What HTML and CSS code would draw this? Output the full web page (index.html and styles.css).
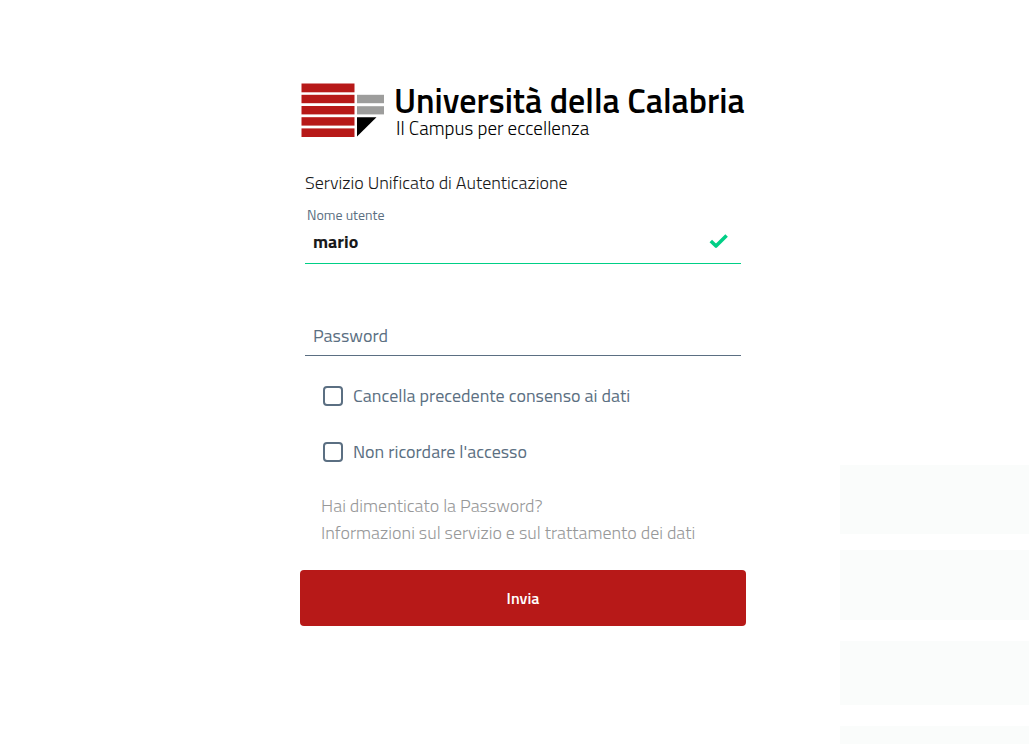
FILE: index.html
```html
<!DOCTYPE html>
<html lang="it">
<head>
  <meta charset="utf-8">
  <meta name="viewport" content="width=device-width, initial-scale=1">
  <title>Università della Calabria - Accesso</title>
  <link rel="stylesheet" href="styles.css">
</head>
<body>
  <div class="backdrop"></div>
  <main class="login">
    <header class="brand">
      <svg class="brand-mark" viewBox="0 0 83 54" aria-hidden="true">
        <g fill="#b71918">
          <rect x="0.5" y="0.5" width="53" height="8.800"/>
          <rect x="0.5" y="11.800" width="53" height="8.400"/>
          <rect x="0.5" y="23" width="53" height="8.400"/>
          <rect x="0.5" y="34.200" width="53" height="8.400"/>
          <rect x="0.5" y="45.400" width="53" height="8.600"/>
        </g>
        <g fill="#9d9d9c">
          <rect x="56" y="11.800" width="27" height="8.400"/>
          <rect x="56" y="23.200" width="27" height="8.200"/>
        </g>
        <path d="M56 34.200H75.500L56 53.600Z" fill="#000"/>
      </svg>
      <div class="brand-text">
        <h1 class="brand-name">Università della Calabria</h1>
        <p class="brand-motto">Il Campus per eccellenza</p>
      </div>
    </header>

    <form class="form">
      <p class="form-title">Servizio Unificato di Autenticazione</p>
      <div class="user-field">
        <label class="user-label" for="username">Nome utente</label>
        <div class="field-line field-valid">
          <input class="field-input user-input" id="username" type="text" value="mario">
          <svg class="check" viewBox="0 0 19 14" aria-hidden="true">
            <path d="M1.800 7L7 12L17.600 1.500" fill="none" stroke="#00cf86" stroke-width="3.600" stroke-linejoin="round"/>
          </svg>
        </div>
      </div>
      <div class="field-line password-field">
        <input class="field-input" id="password" type="password" placeholder="Password" aria-label="Password">
      </div>
      <div class="options">
        <label class="option"><input class="option-box" type="checkbox">Cancella precedente consenso ai dati</label>
        <label class="option"><input class="option-box" type="checkbox">Non ricordare l'accesso</label>
      </div>
      <nav class="links">
        <a class="link" href="#">Hai dimenticato la Password?</a>
        <a class="link" href="#">Informazioni sul servizio e sul trattamento dei dati</a>
      </nav>
      <button class="submit" type="submit">Invia</button>
    </form>
  </main>
</body>
</html>
```

FILE: styles.css
```css
* {
  box-sizing: border-box;
}

body {
  margin: 0;
  min-height: 100vh;
  background: #fff;
  color: #19191a;
  font-family: "Titillium Web", Roboto, sans-serif;
  font-size: 18px;
  line-height: 27px;
}

.backdrop {
  position: absolute;
  right: 0;
  bottom: 0;
  z-index: -1;
  width: 189px;
  height: 279px;
  background: linear-gradient(#fafcfb 69px, #fff 69px 85px, #fafcfb 85px 155px, #fff 155px 176px, #fafcfb 176px 240px, #fff 240px 261px, #fafcfb 261px);
}

.login {
  display: flex;
  flex-direction: column;
  align-items: center;
  padding: 83px 0 32px 17px;
}

.brand,
.form {
  width: 100%;
  max-width: 446px;
}

.brand {
  display: flex;
  align-items: flex-start;
  gap: 10px;
  padding-left: 1px;
}

.brand-mark {
  flex: none;
  width: 83px;
  height: 54px;
}

.brand-name,
.brand-motto,
.form-title {
  margin: 0;
}

.brand-name {
  color: #000;
  font-size: 34px;
  font-weight: 600;
  line-height: 34px;
  white-space: nowrap;
}

.brand-motto {
  padding-left: 2px;
  color: #000;
  font-size: 19px;
  font-weight: 300;
  line-height: 22px;
}

.form {
  display: flex;
  flex-direction: column;
  padding-top: 30px;
}

.form-title {
  padding-left: 5px;
  font-weight: 300;
}

.user-field {
  display: flex;
  flex-direction: column;
  padding: 11px 5px 0;
}

.user-label {
  padding-left: 2px;
  color: #5b6f82;
  font-size: 14px;
  line-height: 16px;
}

.field-line {
  display: flex;
  align-items: center;
  border-bottom: 1px solid #5b6f82;
}

.field-valid {
  padding: 0 13px 4px 0;
  border-color: #00cf86;
}

.field-input {
  flex: 1;
  min-width: 0;
  height: 40px;
  padding: 0 8px;
  border: 0;
  outline: 0;
  background: transparent;
  color: #19191a;
  font: inherit;
}

.field-input::placeholder {
  color: #5b6f82;
  opacity: 1;
}

.user-input {
  height: 36px;
  font-weight: 700;
}

.check {
  width: 19px;
  height: 14px;
}

.password-field {
  margin: 51px 5px 0;
}

.options {
  display: flex;
  flex-direction: column;
  gap: 28px;
  padding: 26px 23px 0;
}

.option {
  display: flex;
  align-items: center;
  gap: 10px;
  color: #5b6f82;
  line-height: 28px;
}

.option-box {
  appearance: none;
  flex: none;
  width: 20px;
  height: 20px;
  margin: 0;
  border: 2px solid #5b6f82;
  border-radius: 4px;
  background: #fff;
}

.option-box:checked {
  background: #5b6f82;
}

.links {
  display: flex;
  flex-direction: column;
  align-items: flex-start;
  padding: 26px 21px 24px;
}

.link {
  color: #979899;
  font-weight: 300;
  text-decoration: none;
}

.submit {
  height: 56px;
  border: 0;
  border-radius: 4px;
  background: #b71918;
  color: #fff;
  font: inherit;
  font-size: 16px;
  font-weight: 600;
}
```
